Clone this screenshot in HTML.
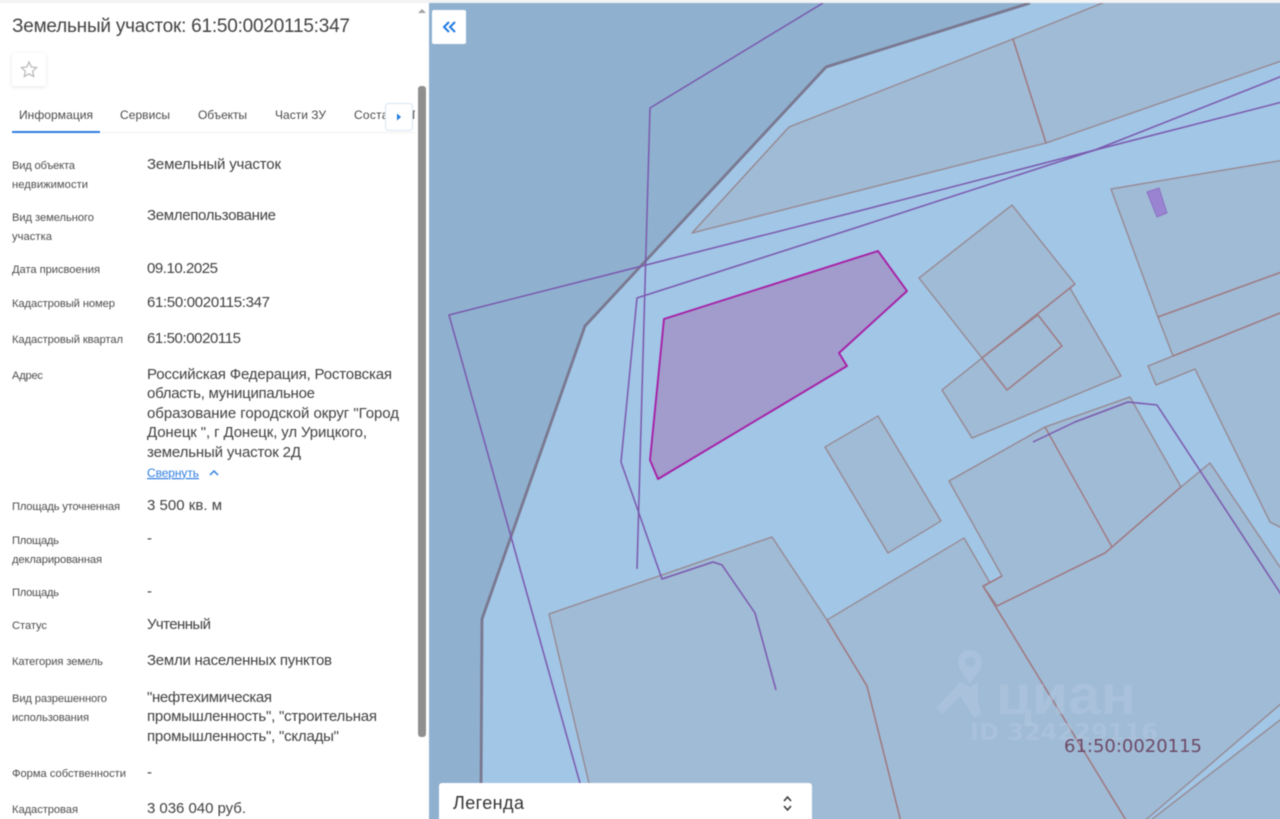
<!DOCTYPE html>
<html lang="ru"><head><meta charset="utf-8"><title>Земельный участок</title>
<style>
html,body{margin:0;padding:0;width:1280px;height:819px;overflow:hidden;background:#fff}
svg{display:block;filter:blur(.4px)}
text{font-family:"Liberation Sans",Arial,sans-serif;fill:#3f3f3f}
.v{font-size:15px;fill:#414141}
.l{font-size:11.2px;fill:#4d4d4d}
.t{font-size:12px;fill:#4a4a4a}
.p{stroke:#96868f;stroke-width:1.3;fill:#a0bbd5;stroke-linejoin:round}
.r{stroke:#a0767f;stroke-width:1.3;fill:none}
.u{stroke:#7a58ae;stroke-width:1.5;fill:none;stroke-linejoin:round}
</style></head><body>
<svg width="1290" height="830" viewBox="0 0 1290 830" xmlns="http://www.w3.org/2000/svg">
<rect width="1290" height="830" fill="#fff"/>
<!-- map -->
<rect x="429" y="3" width="861" height="827" fill="#a2c6e6"/>
<polygon points="429,3 1030,3 826,67 585,326 482,619 481,830 429,830" fill="#8fb1cf"/>
<polygon class="p" points="692,233 789,127 1013,39 1046,143"/>
<polygon class="p" points="1013,39 1110,0 1290,0 1290,58 1046,143"/>
<polygon class="p" points="1111,189 1290,159 1290,269 1158,317"/>
<polygon class="p" points="1158,317 1290,269 1290,309 1173,356"/>
<polygon class="p" points="942,390 1070,288 1121,376 972,438"/>
<polygon class="p" points="919,278 1012,205 1075,284 982,358"/>
<polygon class="p" points="1038,315 1062,346 1007,390 982,358"/>
<polygon class="p" points="1148,366 1173,356 1290,309 1290,532 1270,522 1195,369 1156,385"/>
<polygon class="p" points="825,447 878,416 941,521 888,553"/>
<polygon class="p" points="549,614 772,537 827,620 867,686 903,830 600,830"/>
<polygon class="p" points="827,620 964,538 990,583 983,586 1132,830 903,830 867,686"/>
<polygon class="p" points="949,481 1045,427 1130,397 1181,487 1112,547 1105,553 997,606 983,586 1002,576"/>
<polygon class="p" points="997,606 1105,553 1112,547 1181,487 1210,463 1290,582 1290,696 1134,830 1132,830 983,586"/>
<polygon class="p" points="1138,830 1280,720 1290,712 1290,830"/>
<path class="r" d="M1158,317L1290,269M1173,356L1290,309M1013,39L1046,143M982,358L1075,284M1038,315L1062,346L1007,390L982,358M1045,427L1112,547M997,606L1105,553L1112,547L1181,487M983,586L1132,830M867,686L903,830M827,620L867,686M984,586L1002,576"/>
<polygon points="1147,192 1159,188 1167,213 1157,217" fill="#9a83d0" stroke="#8a72c4" stroke-width="1"/>
<!-- subject plot -->
<polygon points="664,319 878,251 907,291 839,353 847,366 658,479 650,460" fill="#a29ccd" stroke="#a61fa6" stroke-width="1.900" stroke-linejoin="round"/>
<!-- thick boundary -->
<polyline points="1030,3 826,67 585,326 482,619 481,790" fill="none" stroke="#7a7890" stroke-width="2.800" stroke-linejoin="round"/>
<!-- purple lines -->
<polyline class="u" points="823,3 650,108 637,569"/>
<polyline class="u" points="590,819 449,315 855,212 1095,150 1290,100"/>
<polyline class="u" points="776,690 755,613 722,565 713,562 662,579 621,462 637,298 855,228 1095,150 1290,73"/>
<polyline class="u" points="1033,442 1075,422 1128,402 1157,405 1290,608"/>
<!-- watermark -->
<g fill="#b0c7de" fill-opacity=".55">
<path fill-rule="evenodd" d="M970,650c-7,0-12,5-12,12c0,8,7,14,12,22c5-8,12-14,12-22c0-7-5-12-12-12zM970,657a5,5 0 1 1 0,10a5,5 0 1 1 0,-10z"/>
<path d="M936,708l24-26l10,5l8-5v19l3,13l-7,4l-14-22l-17,18z"/>
<text x="996" y="714" style="font-family:'Liberation Sans',sans-serif;font-size:56px;font-weight:700;fill:#b0c7de" textLength="140" lengthAdjust="spacingAndGlyphs">циан</text>
<text x="970" y="740" style="font-family:'DejaVu Sans',sans-serif;font-size:23px;font-weight:700;fill:#b0c7de" textLength="188" lengthAdjust="spacingAndGlyphs">ID 324229116</text>
</g>
<text x="1064" y="752" style="font-family:'DejaVu Sans',sans-serif;font-size:18px;fill:#6c4a68" textLength="138">61:50:0020115</text>
<!-- collapse button -->
<rect x="432" y="10" width="34" height="34" rx="2" fill="#fff"/>
<path d="M449,22l-5,5l5,5M455,22l-5,5l5,5" fill="none" stroke="#1f7ae0" stroke-width="2"/>
<!-- legend -->
<rect x="439" y="783" width="373" height="50" rx="3" fill="#fff"/>
<text x="453" y="809" font-size="18" style="fill:#333" textLength="71">Легенда</text>
<path d="M784,801l3.500-4l3.500,4M784,806l3.500,4l3.500-4" fill="none" stroke="#333" stroke-width="1.500"/>
<!-- panel -->
<rect x="0" y="0" width="429" height="830" fill="#fff"/>
<rect x="0" y="0" width="1290" height="3" fill="#f1f2f3"/>
<text x="12" y="32" font-size="19" style="fill:#434343" textLength="338">Земельный участок: 61:50:0020115:347</text>
<rect x="12" y="53" width="34" height="33" rx="2" fill="#fff" style="filter:drop-shadow(0 1px 2px rgba(0,0,0,.1))"/>
<path d="M29,62l2.300,4.900l5.200,.7l-3.800,3.600l1,5.300l-4.700-2.600l-4.700,2.600l1-5.300l-3.800-3.600l5.200-.7z" fill="none" stroke="#bcbcbc" stroke-width="1.300"/>
<!-- tabs -->
<text class="t" x="19" y="119" textLength="74">Информация</text>
<text class="t" x="120" y="119" textLength="50">Сервисы</text>
<text class="t" x="198" y="119" textLength="49">Объекты</text>
<text class="t" x="275" y="119" textLength="51">Части ЗУ</text>
<text class="t" x="354" y="119" textLength="41">Состав</text>
<text class="t" x="412" y="119">Г</text>
<rect x="415" y="100" width="3" height="30" fill="#fff"/>
<rect x="12" y="132" width="403" height="1" fill="#f2f2f0"/>
<rect x="12" y="131" width="88" height="2" fill="#2f7de1"/>
<rect x="385.500" y="103.500" width="27" height="27" rx="3" fill="#fff" stroke="#d8e6f5"/>
<path d="M397,113.500l4,3.500l-4,3.500z" fill="#1f7ae0"/>
<!-- labels -->
<text class="l" x="12" y="169" textLength="63">Вид объекта</text>
<text class="l" x="12" y="188" textLength="76">недвижимости</text>
<text class="l" x="12" y="221" textLength="82">Вид земельного</text>
<text class="l" x="12" y="240" textLength="40">участка</text>
<text class="l" x="12" y="273" textLength="88">Дата присвоения</text>
<text class="l" x="12" y="307" textLength="103">Кадастровый номер</text>
<text class="l" x="12" y="343" textLength="111">Кадастровый квартал</text>
<text class="l" x="12" y="379" textLength="31">Адрес</text>
<text class="l" x="12" y="510" textLength="108">Площадь уточненная</text>
<text class="l" x="12" y="544" textLength="47">Площадь</text>
<text class="l" x="12" y="563" textLength="90">декларированная</text>
<text class="l" x="12" y="596" textLength="47">Площадь</text>
<text class="l" x="12" y="629" textLength="35">Статус</text>
<text class="l" x="12" y="665" textLength="91">Категория земель</text>
<text class="l" x="12" y="702" textLength="95">Вид разрешенного</text>
<text class="l" x="12" y="721" textLength="77">использования</text>
<text class="l" x="12" y="777" textLength="114">Форма собственности</text>
<text class="l" x="12" y="813" textLength="66">Кадастровая</text>
<!-- values -->
<text class="v" x="147" y="169" textLength="134">Земельный участок</text>
<text class="v" x="147" y="220" textLength="129">Землепользование</text>
<text class="v" x="147" y="273" textLength="71">09.10.2025</text>
<text class="v" x="147" y="307" textLength="123">61:50:0020115:347</text>
<text class="v" x="147" y="343" textLength="94">61:50:0020115</text>
<text class="v" x="147" y="379" textLength="245">Российская Федерация, Ростовская</text>
<text class="v" x="147" y="398" textLength="168">область, муниципальное</text>
<text class="v" x="147" y="418" textLength="252">образование городской округ "Город</text>
<text class="v" x="147" y="437" textLength="220">Донецк ", г Донецк, ул Урицкого,</text>
<text class="v" x="147" y="457" textLength="154">земельный участок 2Д</text>
<text x="147" y="477" font-size="12" style="fill:#2f7de1;text-decoration:underline" textLength="52">Свернуть</text>
<path d="M210,475l4-4l4,4" fill="none" stroke="#2f7de1" stroke-width="1.500"/>
<text class="v" x="147" y="510" textLength="75">3 500 кв. м</text>
<text class="v" x="147" y="543">-</text>
<text class="v" x="147" y="596">-</text>
<text class="v" x="147" y="629" textLength="64">Учтенный</text>
<text class="v" x="147" y="665" textLength="185">Земли населенных пунктов</text>
<text class="v" x="147" y="702" textLength="125">"нефтехимическая</text>
<text class="v" x="147" y="721" textLength="230">промышленность", "строительная</text>
<text class="v" x="147" y="741" textLength="192">промышленность", "склады"</text>
<text class="v" x="147" y="777">-</text>
<text class="v" x="147" y="813" textLength="99">3 036 040 руб.</text>
<!-- scrollbar -->
<rect x="418" y="86" width="8" height="651" rx="3" fill="#8f8f8f"/>
<path d="M418,13l4-4l4,4z" fill="#a0a0a0"/>
</svg>
</body></html>
